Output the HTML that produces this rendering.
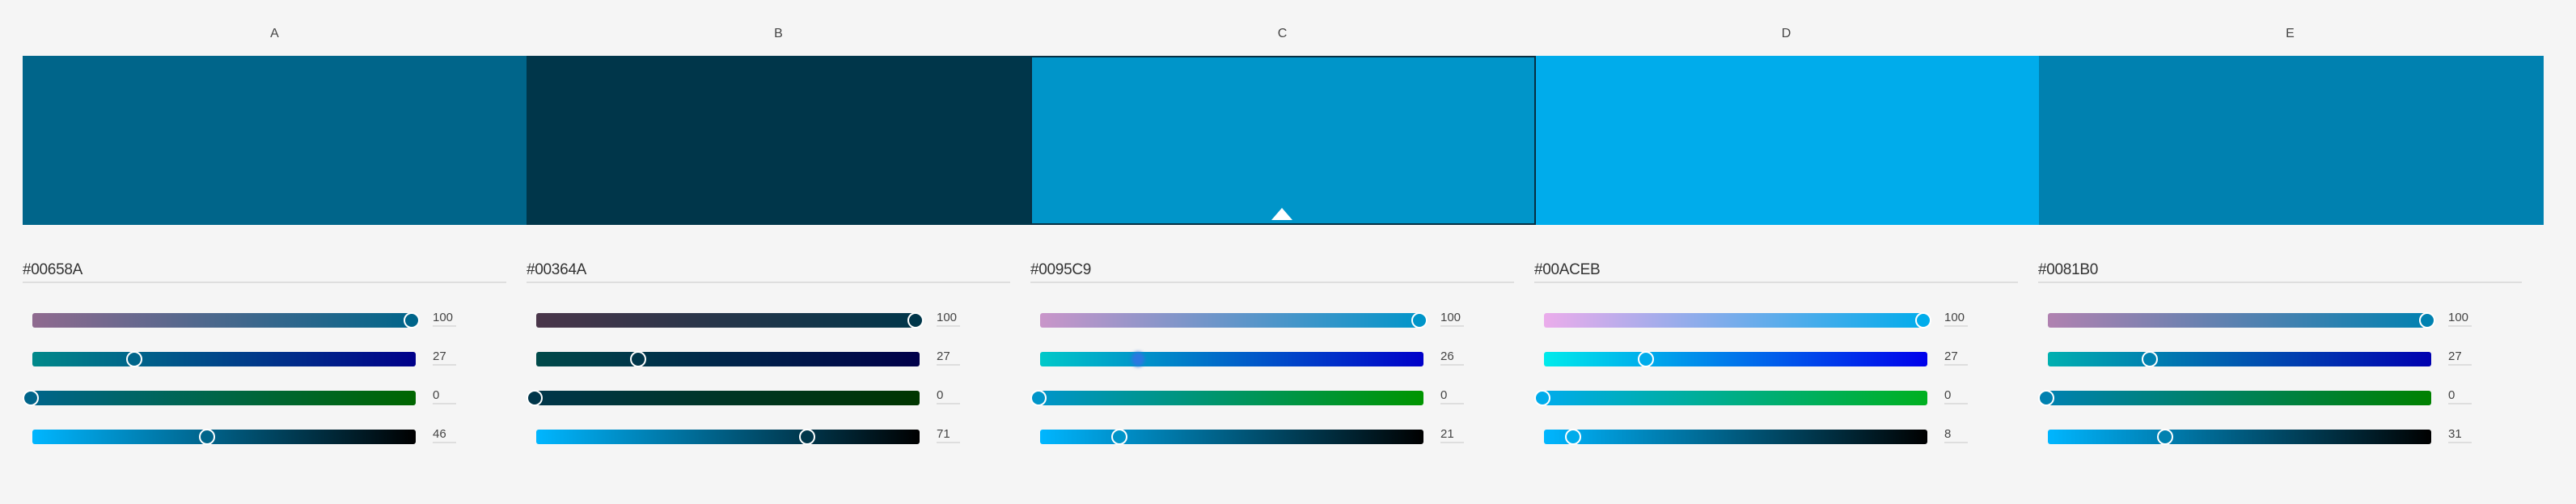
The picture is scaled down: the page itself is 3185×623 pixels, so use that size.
<!DOCTYPE html>
<html><head><meta charset="utf-8"><style>
body{margin:0;width:3185px;height:623px;background:#f5f5f5;position:relative;overflow:hidden;font-family:"Liberation Sans",sans-serif;}
.a{position:absolute}
.lab{top:33px;width:623px;text-align:center;font-size:16px;color:#444}
.sw{top:69px;height:209px;width:624px}
.hex{top:323px;font-size:19px;color:#333;letter-spacing:-0.3px}
.ul{top:348px;height:2px;width:598px;background:#dedede}
.tr{height:18px;width:474px;border-radius:3px}
.th{width:16px;height:16px;border:2px solid #fff;border-radius:50%}
.v{font-size:15px;color:#444}
.vu{height:2px;width:29px;background:#dedede}
</style></head><body>
<div class="a lab" style="left:28px">A</div>
<div class="a lab" style="left:651px">B</div>
<div class="a lab" style="left:1274px">C</div>
<div class="a lab" style="left:1897px">D</div>
<div class="a lab" style="left:2520px">E</div>
<div class="a sw" style="left:28px;background:#00658A"></div>
<div class="a sw" style="left:651px;background:#00364A"></div>
<div class="a sw" style="left:2520px;background:#0081B0;width:625px"></div>
<div class="a sw" style="left:1897px;background:#00ACEB"></div>
<div class="a sw" style="left:1274px;background:#0095C9;box-sizing:border-box;border:2px solid #062f42;width:625px"></div>
<div class="a" style="left:1572px;top:257px;width:0;height:0;border-left:13px solid transparent;border-right:13px solid transparent;border-bottom:15px solid #fff"></div>
<div id="c"></div>
<script>
var cols=[["#00658A","#8f6a8f","#00898a","#00008a","#006600","#0a6a8a",[100,27,0,46]],
["#00364A","#4a364a","#004a4a","#00004a","#003600","#00364a",[100,27,0,71]],
["#0095C9","#c995c9","#00c9c9","#0000c9","#009500","#0095c9",[100,26,0,21]],
["#00ACEB","#ebaceb","#00ebeb","#0000eb","#00b020","#00aceb",[100,27,0,8]],
["#0081B0","#b081b0","#00b0b0","#0000b0","#008100","#0081b0",[100,27,0,31]]];
var h="";
cols.forEach(function(c,i){
 var x=28+i*623;
 h+='<div class="a hex" style="left:'+x+'px">'+c[0]+'</div>';
 h+='<div class="a ul" style="left:'+x+'px"></div>';
 var g=["linear-gradient(90deg,"+c[1]+","+c[0]+")","linear-gradient(90deg,"+c[2]+","+c[3]+")","linear-gradient(90deg,"+c[0]+","+c[4]+")","linear-gradient(90deg,#00b6ff,#000)"];
 for(var r=0;r<4;r++){
  var y=387+r*48, v=c[6][r];
  h+='<div class="a tr" style="left:'+(x+12)+'px;top:'+y+'px;background:'+g[r]+'"></div>';
  var cx=x+10+v/100*474; if(v>=100)cx=x+481;
  if(!(i==2&&r==1)) h+='<div class="a th" style="left:'+(cx-10)+'px;top:'+(y-1)+'px;background:'+c[0]+'"></div>';
  else h+='<div class="a" style="left:'+(cx-8)+'px;top:'+y+'px;width:16px;height:18px;border-radius:50%;background:#2a78e0;filter:blur(2px)"></div>';
  h+='<div class="a v" style="left:'+(x+507)+'px;top:'+(y-3)+'px">'+v+'</div>';
  h+='<div class="a vu" style="left:'+(x+507)+'px;top:'+(y+15)+'px"></div>';
 }
});
document.getElementById("c").innerHTML=h;
</script>
</body></html>
